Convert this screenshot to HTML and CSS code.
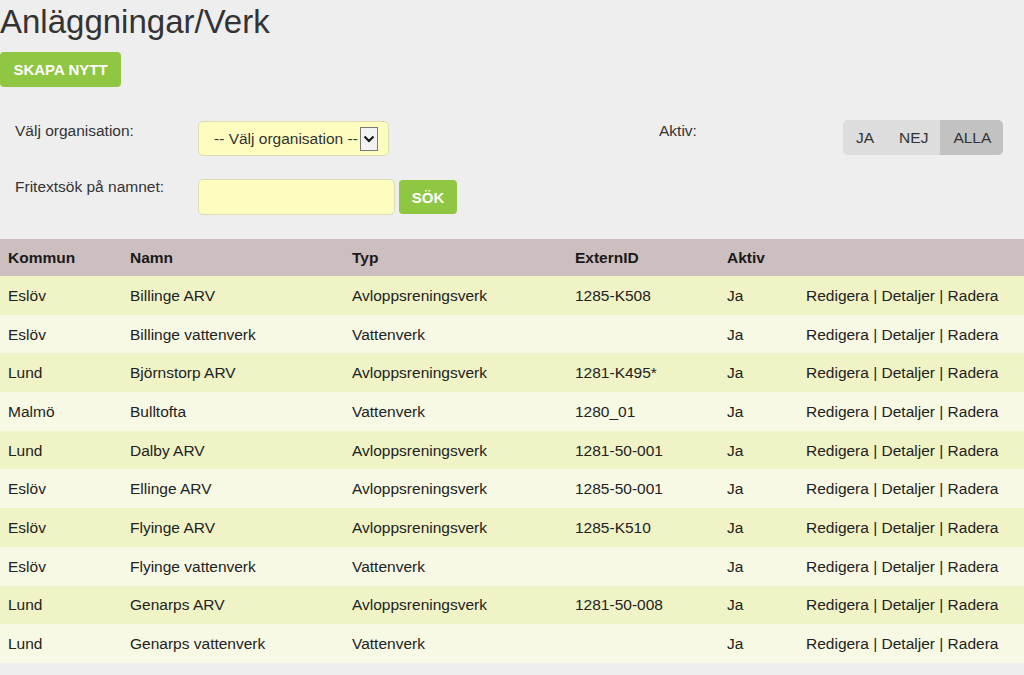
FILE: index.html
```html
<!DOCTYPE html>
<html lang="sv">
<head>
<meta charset="utf-8">
<title>Anläggningar/Verk</title>
<link rel="stylesheet" href="styles.css">
</head>
<body>
<h1 class="page-title">Anläggningar/Verk</h1>
<a class="btn btn-create" href="#">SKAPA NYTT</a>

<div class="filters">
  <label class="filter-label">Välj organisation:</label>
  <div class="select"><span class="select-text">-- Välj organisation --</span><span class="select-arrow"><svg width="12" height="8" viewBox="0 0 12 8"><path d="M1.5 1.5 L6 6 L10.5 1.5" fill="none" stroke="#111" stroke-width="2"/></svg></span></div>
  <label class="filter-label">Aktiv:</label>
  <div class="segmented">
    <span class="seg">JA</span><span class="seg">NEJ</span><span class="seg seg-active">ALLA</span>
  </div>
  <label class="filter-label filter-label-2">Fritextsök på namnet:</label>
  <div class="search-group">
    <input class="search-input" type="text">
    <button class="btn btn-search">SÖK</button>
  </div>
</div>

<table class="list">
  <colgroup>
    <col class="c1"><col class="c2"><col class="c3"><col class="c4"><col class="c5"><col>
  </colgroup>
  <thead>
    <tr><th>Kommun</th><th>Namn</th><th>Typ</th><th>ExternID</th><th>Aktiv</th><th></th></tr>
  </thead>
  <tbody>
    <tr><td>Eslöv</td><td>Billinge ARV</td><td>Avloppsreningsverk</td><td>1285-K508</td><td>Ja</td><td class="actions"><a href="#">Redigera</a> | <a href="#">Detaljer</a> | <a href="#">Radera</a></td></tr>
    <tr><td>Eslöv</td><td>Billinge vattenverk</td><td>Vattenverk</td><td></td><td>Ja</td><td class="actions"><a href="#">Redigera</a> | <a href="#">Detaljer</a> | <a href="#">Radera</a></td></tr>
    <tr><td>Lund</td><td>Björnstorp ARV</td><td>Avloppsreningsverk</td><td>1281-K495*</td><td>Ja</td><td class="actions"><a href="#">Redigera</a> | <a href="#">Detaljer</a> | <a href="#">Radera</a></td></tr>
    <tr><td>Malmö</td><td>Bulltofta</td><td>Vattenverk</td><td>1280_01</td><td>Ja</td><td class="actions"><a href="#">Redigera</a> | <a href="#">Detaljer</a> | <a href="#">Radera</a></td></tr>
    <tr><td>Lund</td><td>Dalby ARV</td><td>Avloppsreningsverk</td><td>1281-50-001</td><td>Ja</td><td class="actions"><a href="#">Redigera</a> | <a href="#">Detaljer</a> | <a href="#">Radera</a></td></tr>
    <tr><td>Eslöv</td><td>Ellinge ARV</td><td>Avloppsreningsverk</td><td>1285-50-001</td><td>Ja</td><td class="actions"><a href="#">Redigera</a> | <a href="#">Detaljer</a> | <a href="#">Radera</a></td></tr>
    <tr><td>Eslöv</td><td>Flyinge ARV</td><td>Avloppsreningsverk</td><td>1285-K510</td><td>Ja</td><td class="actions"><a href="#">Redigera</a> | <a href="#">Detaljer</a> | <a href="#">Radera</a></td></tr>
    <tr><td>Eslöv</td><td>Flyinge vattenverk</td><td>Vattenverk</td><td></td><td>Ja</td><td class="actions"><a href="#">Redigera</a> | <a href="#">Detaljer</a> | <a href="#">Radera</a></td></tr>
    <tr><td>Lund</td><td>Genarps ARV</td><td>Avloppsreningsverk</td><td>1281-50-008</td><td>Ja</td><td class="actions"><a href="#">Redigera</a> | <a href="#">Detaljer</a> | <a href="#">Radera</a></td></tr>
    <tr><td>Lund</td><td>Genarps vattenverk</td><td>Vattenverk</td><td></td><td>Ja</td><td class="actions"><a href="#">Redigera</a> | <a href="#">Detaljer</a> | <a href="#">Radera</a></td></tr>
  </tbody>
</table>
</body>
</html>
```

FILE: styles.css
```css
html, body {
  margin: 0;
  padding: 0;
  background: #eeeeee;
  font-family: "Liberation Sans", Arial, sans-serif;
  font-size: 15.5px;
  color: #333333;
}

.page-title {
  margin: 0;
  font-size: 33px;
  font-weight: normal;
  line-height: 44px;
  height: 44px;
  color: #333333;
}

.btn {
  display: inline-flex;
  align-items: center;
  justify-content: center;
  border: none;
  border-radius: 4px;
  background: #8fc642;
  color: #ffffff;
  font-family: "Liberation Sans", Arial, sans-serif;
  font-weight: bold;
  font-size: 15px;
  text-decoration: none;
  padding: 0;
}

.btn-create {
  margin-top: 8px;
  width: 121px;
  height: 35px;
}

.filters {
  margin-top: 33px;
  padding-left: 15px;
  display: grid;
  grid-template-columns: 183px 461px 184px 160px;
  grid-template-rows: 36px 36px;
  row-gap: 23px;
}

.filter-label {
  line-height: 18px;
  margin-top: 2px;
  color: #333333;
}

.filter-label-2 {
  margin-top: -1px;
}

.select {
  margin-top: 1px;
  box-sizing: border-box;
  width: 191px;
  height: 35px;
  background: #fdfdc0;
  border: 1px solid #dcdcb0;
  border-radius: 5px;
  display: flex;
  align-items: center;
  padding-left: 15px;
  color: #333333;
}

.select-text {
  padding-top: 1px;
}

.select-arrow {
  margin-left: 2px;
  box-sizing: border-box;
  width: 18px;
  height: 24px;
  border: 1px solid #7a7a7a;
  background: #f3f3f3;
  display: flex;
  align-items: center;
  justify-content: center;
}

.segmented {
  display: flex;
  height: 35px;
  border-radius: 5px;
  overflow: hidden;
  background: #dddddd;
  width: 160px;
}

.seg {
  display: flex;
  align-items: center;
  justify-content: center;
  flex: 0 0 auto;
  padding: 0 12px 0 13px;
  color: #333333;
}

.seg-active {
  flex: 1 1 auto;
  background: #c2c2c2;
}

.search-group {
  grid-column: 2 / 5;
  display: flex;
  align-items: center;
  gap: 4px;
}

.search-input {
  box-sizing: border-box;
  width: 197px;
  height: 36px;
  margin: 0;
  background: #fdfdc0;
  border: 1px solid #dcdcb0;
  border-radius: 5px;
  outline: none;
}

.btn-search {
  width: 58px;
  height: 34px;
}

.list {
  margin-top: 24px;
  width: 100%;
  border-collapse: collapse;
  table-layout: fixed;
  color: #222222;
}

.c1 { width: 130px; }
.c2 { width: 222px; }
.c3 { width: 223px; }
.c4 { width: 152px; }
.c5 { width: 79px; }

.list th {
  background: #cdbfbf;
  height: 37px;
  padding: 0 0 0 8px;
  text-align: left;
  font-weight: bold;
  color: #1a1a1a;
}

.list th + th,
.list td + td {
  padding-left: 0;
}

.list td {
  height: 37.7px;
  padding: 1px 0 0 8px;
  white-space: nowrap;
}

.list tbody tr:nth-child(odd) td {
  background: #eff3c6;
}

.list tbody tr:nth-child(even) td {
  background: #f7f9e4;
}

.actions a {
  color: #222222;
  text-decoration: none;
}
```
